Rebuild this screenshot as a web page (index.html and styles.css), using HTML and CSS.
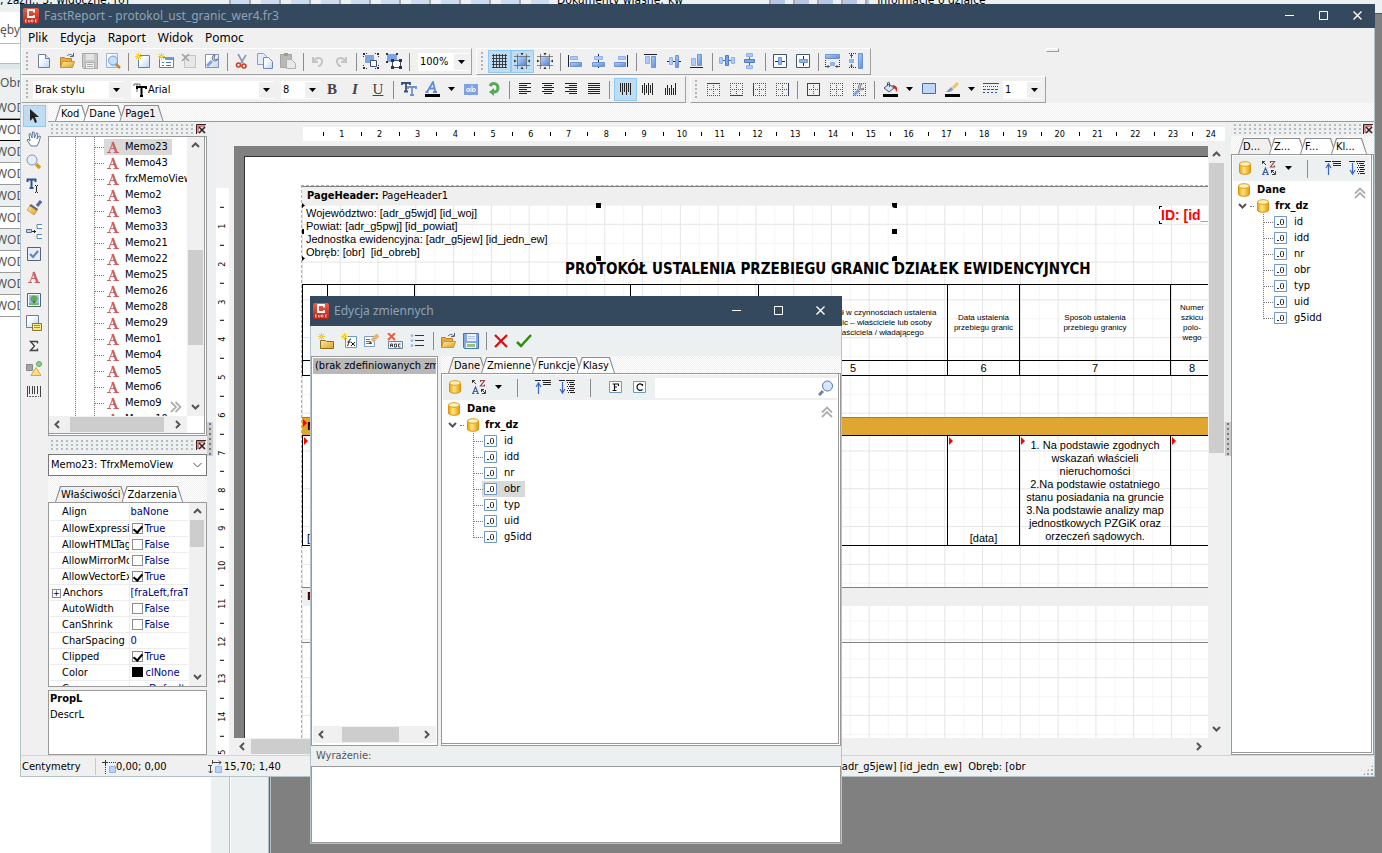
FILE: index.html
```html
<!DOCTYPE html>
<html lang="pl">
<head>
<meta charset="utf-8">
<title>FastReport - protokol_ust_granic_wer4.fr3</title>
<link rel="stylesheet" href="styles.css">
</head>
<body>
<svg class="sprite" aria-hidden="true">
  <defs>
    <linearGradient id="gBlue" x1="0" y1="0" x2="1" y2="1"><stop offset="0" stop-color="#b4d2ff"/><stop offset="1" stop-color="#5b86d0"/></linearGradient>
    <linearGradient id="gPaper" x1="0" y1="0" x2="1" y2="1"><stop offset="0.3" stop-color="#fff"/><stop offset="1" stop-color="#bcd0ee"/></linearGradient>
    <linearGradient id="gGold" x1="0" y1="0" x2="1" y2="1"><stop offset="0" stop-color="#ffe9a8"/><stop offset="1" stop-color="#e0a020"/></linearGradient>
    <linearGradient id="gDrum" x1="0" y1="0" x2="1" y2="0"><stop offset="0" stop-color="#e8a010"/><stop offset="0.4" stop-color="#ffe680"/><stop offset="1" stop-color="#e59a0c"/></linearGradient>
    <linearGradient id="gRed" x1="0" y1="0" x2="0" y2="1"><stop offset="0" stop-color="#e8604c"/><stop offset="1" stop-color="#b82418"/></linearGradient>
  </defs>
  <symbol id="logo" viewBox="0 0 16 16"><rect width="16" height="16" rx="2" fill="url(#gRed)"/><path d="M11 4.500V2H5v7h6V7" fill="none" stroke="#fff" stroke-width="1.800"/><path d="M2 12h2M2 14h2M2.500 12v2M5.500 12v2h1.500v-2M8.500 12v2h1.500v-2zM12 12h2M12 14h2M12.500 12v2" stroke="#f6c0b8" stroke-width=".8" fill="none"/></symbol>
  <symbol id="new" viewBox="0 0 16 16"><path d="M2.500 1.500h7l4 4v9h-11z" fill="url(#gPaper)" stroke="#6b7fa0"/><path d="M9.500 1.500v4h4" fill="#dbe6f8" stroke="#6b7fa0"/></symbol>
  <symbol id="open" viewBox="0 0 16 16"><path d="M1.500 14.500v-10h4l1 1h6v3" fill="#e8a83a" stroke="#c08420"/><path d="M1.500 14.500l2-6h12l-2 6z" fill="url(#gGold)" stroke="#d09428"/><path d="M8 3c2-2 4-2 6 0M14.500 0v3.500H11" fill="none" stroke="#4c6288"/></symbol>
  <symbol id="savegray" viewBox="0 0 16 16"><path d="M.5 .5h15v15h-14l-1-1z" fill="#c8c8c8" stroke="#a8a8a8"/><path d="M4 1h8v6H4z" fill="#e4e4e4"/><path d="M3.500 9.500h9v6h-9z" fill="#efefef" stroke="#b0b0b0"/><path d="M5 11.500h6M5 13.500h6" stroke="#b0b0b0"/></symbol>
  <symbol id="save" viewBox="0 0 16 16"><path d="M.5 .5h15v15h-14l-1-1z" fill="#86a8e6" stroke="#4a72b8"/><path d="M4 1h9v7H4z" fill="#eef4ff"/><path d="M5 3.500h7M5 5.500h7" stroke="#b4c6e6"/><path d="M3 10h10v5H3z" fill="#f4f8ff"/><path d="M4 11h8v3H4z" fill="#90c878"/></symbol>
  <symbol id="preview" viewBox="0 0 16 16"><path d="M1.500 .5h11v14h-11z" fill="url(#gPaper)" stroke="#9fb2d0"/><path d="M11 11l4 4" stroke="#b98b36" stroke-width="2.500"/><circle cx="8" cy="7.500" r="4.500" fill="#c4e2ff" stroke="#6f9bd2"/></symbol>
  <symbol id="star" viewBox="0 0 16 16"><path d="M3.500 0v7M0 3.500h7M1 1l5 5M6 1L1 6" stroke="#f0c828"/><path d="M3 3h1v1H3z" fill="#fff6a0"/></symbol>
  <symbol id="newpage" viewBox="0 0 16 16"><path d="M3.500 2.500h11v12h-11z" fill="url(#gPaper)" stroke="#6b7f9e"/><use href="#star" width="16" height="16"/></symbol>
  <symbol id="newform" viewBox="0 0 16 16"><path d="M1.500 4.500h14v10h-14z" fill="#fff" stroke="#5f7fb6"/><path d="M7 4h8v3H7z" fill="#6f98de"/><path d="M4 9.500h2M8 9.500h5M4 12.500h2M8 12.500h5" stroke="#4f75ba"/><use href="#star" width="16" height="16"/></symbol>
  <symbol id="delpage" viewBox="0 0 16 16"><path d="M3.500 2.500h11v12h-11z" fill="#e8e8e8" stroke="#c4c4c4"/><path d="M1 1l7 7M8 1L1 8" stroke="#a0a0a0" stroke-width="1.500"/></symbol>
  <symbol id="wrench" viewBox="0 0 16 16"><path d="M1.500 1.500h13v13h-13z" fill="url(#gPaper)" stroke="#8094b4"/><path d="M3 13l5-5" stroke="#7ea2e4" stroke-width="3"/><path d="M11 2a3 3 0 1 0 3 4l-3 1-1-2z" fill="#d5dbe8" stroke="#6a7894"/></symbol>
  <symbol id="cut" viewBox="0 0 16 16"><path d="M4 1l5 9M12 2l-5 8" stroke="#8798b4" stroke-width="1.600"/><circle cx="4.500" cy="12" r="2" fill="none" stroke="#d23a28" stroke-width="1.600"/><circle cx="10" cy="13" r="2" fill="none" stroke="#d23a28" stroke-width="1.600"/></symbol>
  <symbol id="copy" viewBox="0 0 16 16"><path d="M.5 .5h6l3 3v8h-9z" fill="#e4ecfb" stroke="#8ba0c4"/><path d="M6.500 4.500h5l4 4v7h-9z" fill="url(#gPaper)" stroke="#6f88b2"/></symbol>
  <symbol id="paste" viewBox="0 0 16 16"><path d="M.5 1.500h11v13H.5z" fill="#b8b8b8" stroke="#a4a4a4"/><path d="M4 0h4v3H4z" fill="#9c9c9c"/><path d="M6.500 6.500h5l4 4v5h-9z" fill="#e8e8e8" stroke="#b0b0b0"/></symbol>
  <symbol id="undo" viewBox="0 0 16 16"><path d="M3 4v5h5M4 8c3-5 9-3 8 1-.4 2-2 4-4 4" fill="none" stroke="#c4c4c4" stroke-width="2"/></symbol>
  <symbol id="redo" viewBox="0 0 16 16"><path d="M13 4v5H8M12 8C9 3 3 5 4 9c.4 2 2 4 4 4" fill="none" stroke="#c4c4c4" stroke-width="2"/></symbol>
  <symbol id="group" viewBox="0 0 16 16"><path d="M2 2h9v8H2z" fill="#7fa4e2"/><path d="M7.500 7.500h6v6h-6z" fill="#fff" stroke="#3a5078"/><path d="M0 0h2v2H0zM14 0h2v2h-2zM0 14h2v2H0zM14 14h2v2h-2z" fill="#333"/><path d="M3 .5h1M.5 3v1M13 .5h-1M15.500 3v1M.5 13v-1M3 15.500h1M15.500 13v-1M13 15.500h-1" stroke="#333"/></symbol>
  <symbol id="ungroup" viewBox="0 0 16 16"><path d="M1 1h10v8H1z" fill="#7fa4e2"/><path d="M6.500 7.500h8v7h-8z" fill="#fff" stroke="#3a5078"/><path d="M0 0h2v2H0zM10 0h2v2h-2zM0 8h2v2H0zM5 6h3v3H5zM13 6h3v3h-3zM5 13h3v3H5zM13 13h3v3h-3z" fill="#333"/></symbol>
  <symbol id="grid" viewBox="0 0 16 16"><path d="M2.500 1v14M5.500 1v14M8.500 1v14M11.500 1v14M14.500 1v14M1 2.500h15M1 5.500h15M1 8.500h15M1 11.500h15M1 14.500h15" stroke="#222" stroke-width=".8"/></symbol>
  <symbol id="snap" viewBox="0 0 16 16"><path d="M4 4h8v8H4z" fill="url(#gBlue)"/><path d="M3.500 1v15M12.500 1v15M0 3.500h16M0 12.500h16" stroke="#555" stroke-width=".7"/><path d="M8 2.500L6.500 0h3zM8 13.500L6.500 16h3zM2.500 8L0 6.500v3zM13.500 8L16 6.500v3z" fill="#333"/></symbol>
  <symbol id="al" viewBox="0 0 16 16"><path d="M1.500 2v12" stroke="#222"/><path d="M3.500 3.500h7v3h-7z" fill="#aecbfb" stroke="#8fb2ee"/><path d="M3.500 9.500h11v4h-11z" fill="url(#gBlue)" stroke="#6e94d4"/></symbol>
  <symbol id="ac" viewBox="0 0 16 16"><path d="M8.500 1v14" stroke="#222"/><path d="M4.500 3.500h8v3h-8z" fill="#aecbfb" stroke="#8fb2ee"/><path d="M2.500 9.500h12v4h-12z" fill="url(#gBlue)" stroke="#6e94d4"/></symbol>
  <symbol id="ar" viewBox="0 0 16 16"><path d="M14.500 2v12" stroke="#222"/><path d="M5.500 3.500h7v3h-7z" fill="#aecbfb" stroke="#8fb2ee"/><path d="M1.500 9.500h11v4h-11z" fill="url(#gBlue)" stroke="#6e94d4"/></symbol>
  <symbol id="at" viewBox="0 0 16 16"><path d="M1 1.500h13" stroke="#222"/><path d="M2.500 3.500h4v7h-4z" fill="#aecbfb" stroke="#8fb2ee"/><path d="M8.500 3.500h4v11h-4z" fill="url(#gBlue)" stroke="#6e94d4"/></symbol>
  <symbol id="am" viewBox="0 0 16 16"><path d="M1 8.500h14" stroke="#222"/><path d="M3.500 4.500h3v7h-3z" fill="#aecbfb" stroke="#8fb2ee"/><path d="M9.500 2.500h3v12h-3z" fill="url(#gBlue)" stroke="#6e94d4"/></symbol>
  <symbol id="ab" viewBox="0 0 16 16"><path d="M1 14.500h13" stroke="#222"/><path d="M2.500 5.500h4v7h-4z" fill="#aecbfb" stroke="#8fb2ee"/><path d="M8.500 1.500h4v11h-4z" fill="url(#gBlue)" stroke="#6e94d4"/></symbol>
  <symbol id="dh" viewBox="0 0 16 16"><path d="M0 7.500h16" stroke="#4668a0"/><path d="M.5 4.500h3v6h-3zM12.500 4.500h3v6h-3z" fill="#aecbfb" stroke="#8fb2ee"/><path d="M6.500 2.500h3v10h-3z" fill="#7ba2e4" stroke="#4f7ac4"/></symbol>
  <symbol id="dv" viewBox="0 0 16 16"><path d="M7.500 0v16" stroke="#4668a0"/><path d="M4.500 .5h6v3h-6zM4.500 12.500h6v3h-6z" fill="#aecbfb" stroke="#8fb2ee"/><path d="M2.500 6.500h10v3h-10z" fill="#7ba2e4" stroke="#4f7ac4"/></symbol>
  <symbol id="ch" viewBox="0 0 16 16"><path d="M1.500 1.500h13v13h-13z" fill="#fff" stroke="#44546c"/><path d="M3 8.500h10" stroke="#222"/><path d="M6.500 4.500h3v7h-3z" fill="#8fb4f4" stroke="#6e94d4"/></symbol>
  <symbol id="cv" viewBox="0 0 16 16"><path d="M1.500 1.500h13v13h-13z" fill="#fff" stroke="#44546c"/><path d="M8.500 3v10" stroke="#222"/><path d="M4.500 6.500h8v3h-8z" fill="#8fb4f4" stroke="#6e94d4"/></symbol>
  <symbol id="sw" viewBox="0 0 16 16"><path d="M.5 1.500h14v4H.5z" fill="url(#gBlue)" stroke="#6e94d4"/><path d="M5 9h5v4H5z" fill="#8fb4f4"/><path d="M.5 7v8M14.500 7v8" stroke="#333" stroke-dasharray="1 1"/><path d="M1 13.500h4M10 13.500h4M3.500 12L2 13.500 3.500 15M11.500 12l1.500 1.500-1.500 1.500" fill="none" stroke="#333" stroke-width=".8"/></symbol>
  <symbol id="sh" viewBox="0 0 16 16"><path d="M10.500 .5h4v15h-4z" fill="url(#gBlue)" stroke="#6e94d4"/><path d="M1 6h5v4H1z" fill="#8fb4f4"/><path d="M1 .5h8M1 14.500h8" stroke="#333" stroke-dasharray="1 1"/><path d="M3.500 1v4M3.500 11v4M2 3l1.500-1.500L5 3M2 12.500L3.500 14 5 12.500" fill="none" stroke="#333" stroke-width=".8"/></symbol>
  <symbol id="tt" viewBox="0 0 16 16"><path d="M1 4V2h8v2M5 2v9M3 10.500h4" fill="none" stroke="#3b4f78" stroke-width="1.800"/><path d="M7 8V6h8v2M11 6v8M9 14h4" fill="none" stroke="#6f92cf" stroke-width="1.800"/></symbol>
  <symbol id="ttb" viewBox="0 0 14 14"><path d="M1 3V1h6v2M4 1v8" fill="none" stroke="#666"/><path d="M4 6V4h9v2M8.500 4v9M7 13h3" fill="none" stroke="#000" stroke-width="2"/></symbol>
  <symbol id="acol" viewBox="0 0 16 16"><path d="M3 11L9 1l2.500 10M5.500 7.500h5M1.500 11h3M9 11h4" fill="none" stroke="#5e8ed6" stroke-width="1.800"/><path d="M1 13h15v3H1z"/></symbol>
  <symbol id="abh" viewBox="0 0 16 16"><path d="M1 3h14v11H1z" fill="#7ea2e4"/><circle cx="5" cy="9" r="1.500" fill="none" stroke="#fff"/><path d="M7 7v4M9 4.500V11" stroke="#fff"/><circle cx="11" cy="9" r="1.500" fill="none" stroke="#fff"/></symbol>
  <symbol id="rot" viewBox="0 0 16 16"><path d="M4 5c2-4 8-3 8 2 0 3-2 4-5 4" fill="none" stroke="#5aa85a" stroke-width="3"/><path d="M8 7v8l-5-4z" fill="#5aa85a"/></symbol>
  <symbol id="tl" viewBox="0 0 16 16"><path d="M2 2.500h12M2 4.500h8M2 6.500h12M2 8.500h8M2 10.500h12M2 12.500h8" stroke="#222"/></symbol>
  <symbol id="tc" viewBox="0 0 16 16"><path d="M2 2.500h12M4 4.500h8M2 6.500h12M4 8.500h8M2 10.500h12M4 12.500h8" stroke="#222"/></symbol>
  <symbol id="tr" viewBox="0 0 16 16"><path d="M2 2.500h12M6 4.500h8M2 6.500h12M6 8.500h8M2 10.500h12M6 12.500h8" stroke="#222"/></symbol>
  <symbol id="tj" viewBox="0 0 16 16"><path d="M2 2.500h12M2 4.500h12M2 6.500h12M2 8.500h12M2 10.500h12M2 12.500h12" stroke="#222"/></symbol>
  <symbol id="vt" viewBox="0 0 16 16"><path d="M3.500 2v9M5.500 2v12M7.500 2v9M9.500 2v12M11.500 2v9M13.500 2v12" stroke="#222"/></symbol>
  <symbol id="vm" viewBox="0 0 16 16"><path d="M2.500 4v8M4.500 2v12M6.500 4v8M8.500 2v12M10.500 4v8M12.500 2v12" stroke="#222"/></symbol>
  <symbol id="vb" viewBox="0 0 16 16"><path d="M2.500 7v7M4.500 4v10M6.500 7v7M8.500 4v10M10.500 7v7M12.500 2v12" stroke="#222"/></symbol>
  <symbol id="dots" viewBox="0 0 16 16"><path d="M2 2.500h13M2 8.500h13M2 14.500h13M2.500 2v13M8.500 2v13M14.500 2v13" fill="none" stroke="#555" stroke-dasharray="1 1"/></symbol>
  <symbol id="bt" viewBox="0 0 16 16"><use href="#dots" width="16" height="16"/><path d="M2 2.500h13" stroke="#33435f"/></symbol>
  <symbol id="bb" viewBox="0 0 16 16"><use href="#dots" width="16" height="16"/><path d="M2 14.500h13" stroke="#33435f"/></symbol>
  <symbol id="bl" viewBox="0 0 16 16"><use href="#dots" width="16" height="16"/><path d="M2.500 2v13" stroke="#33435f"/></symbol>
  <symbol id="br" viewBox="0 0 16 16"><use href="#dots" width="16" height="16"/><path d="M14.500 2v13" stroke="#33435f"/></symbol>
  <symbol id="ba" viewBox="0 0 16 16"><use href="#dots" width="16" height="16"/><path d="M2.500 2.500h12v12h-12z" fill="none" stroke="#33435f"/></symbol>
  <symbol id="bw" viewBox="0 0 16 16"><use href="#dots" width="16" height="16"/><path d="M3 14l5-5" stroke="#7ea2e4" stroke-width="3"/><path d="M11 3a3 3 0 1 0 2 4l-3 1-1-2z" fill="#ccd" stroke="#888"/></symbol>
  <symbol id="bucket" viewBox="0 0 16 16"><path d="M2 7l5-4 5 4-5 4z" fill="#d9e6f8" stroke="#44546c"/><path d="M5.500 5V2c0-1 2-1 2 0v4" fill="none" stroke="#44546c"/><path d="M10 4c4 0 6 2 5 7-1-2-2-3-3-4z" fill="#d62a1a"/><path d="M1 13h15v3H1z"/></symbol>
  <symbol id="rectf" viewBox="0 0 16 16"><path d="M1.500 2.500h13v10h-13z" fill="#c2d6fb" stroke="#4a6aa4"/></symbol>
  <symbol id="brush" viewBox="0 0 16 16"><path d="M14 2L9 7" stroke="#ecc468" stroke-width="3"/><path d="M7 6l2.500 2.500L6 11H2z" fill="#8b9ab4"/><path d="M1 13h15v3H1z"/></symbol>
  <symbol id="lines" viewBox="0 0 16 16"><path d="M0 2.500h16" stroke="#2f5296"/><path d="M0 5.500h16" stroke="#2f5296" stroke-dasharray="1 1"/><path d="M0 8.500h16" stroke="#2f5296" stroke-dasharray="3 1"/><path d="M0 11.500h16" stroke="#2f5296" stroke-dasharray="2 2"/></symbol>
  <symbol id="dd" viewBox="0 0 7 4"><path d="M0 0h7L3.500 4z"/></symbol>
  <symbol id="arrow" viewBox="0 0 16 16"><path d="M4 1v12l3-3 2 5 2-1-2-5h4z" fill="#222"/></symbol>
  <symbol id="hand" viewBox="0 0 16 16"><path d="M5 15L1 9l1-1 2 2-1-7 1.500-.5L6 7l.5-6H8l.5 6 2-5 1.500.5L11 8l2-3 1.500.5L13 11l-2 4z" fill="#fff" stroke="#5d79a8"/></symbol>
  <symbol id="zoomt" viewBox="0 0 16 16"><path d="M10 10l4 4" stroke="#c9a028" stroke-width="3.500"/><circle cx="6" cy="6" r="5" fill="#e6f0fc" stroke="#8194b0"/></symbol>
  <symbol id="textt" viewBox="0 0 16 16"><path d="M1.500 5V2.500h8V5M5.500 2v9M3.500 11h4" fill="none" stroke="#2c5596" stroke-width="2"/><path d="M9 8.500h1M11 8.500h1M9 15.500h1M11 15.500h1M10.500 9v6" stroke="#222"/></symbol>
  <symbol id="fmt" viewBox="0 0 16 16"><path d="M15 1l-4 5" stroke="#5566a8" stroke-width="3"/><path d="M5 4l7 5-1 2-8-5z" fill="#667"/><path d="M4 6l7 5-3 4-7-5z" fill="url(#gGold)" stroke="#b98c20" stroke-width=".6"/></symbol>
  <symbol id="bands" viewBox="0 0 16 16"><path d="M.5 6.500h5v3h-5z" fill="#c0d2ee" stroke="#5b7092"/><path d="M6 8.500h4M8.500 7v3" stroke="#222"/><path d="M16 1.500h-5v4h5M16 11.500h-5v4h5" fill="#fff" stroke="#5b88c0"/></symbol>
  <symbol id="chk" viewBox="0 0 16 16"><path d="M1.500 1.500h13v13h-13z" fill="#e8ecf4" stroke="#56627a"/><path d="M4 8l3 3 5-6" fill="none" stroke="#5f7ec4" stroke-width="2"/></symbol>
  <symbol id="aicon" viewBox="0 0 12 12"><path d="M2 11L6 1M3.500 7.500h4M0 11.500h4M6.500 11.500H12" fill="none" stroke="#c86464"/><path d="M5.500 1l4 10.500" stroke="#c86464" stroke-width="2.400"/></symbol>
  <symbol id="pic" viewBox="0 0 16 16"><path d="M1.500 1.500h13v13h-13z" fill="#fff" stroke="#56627a"/><path d="M3 3h10v10H3z" fill="#9cc4f4"/><circle cx="8" cy="7" r="3.500" fill="#58ac54"/><path d="M7 9h2v3H7z" fill="#8a5a20"/><path d="M3 11h10v2H3z" fill="#6cbc64"/></symbol>
  <symbol id="sub" viewBox="0 0 16 16"><path d="M.5 .5h12v12H.5z" fill="url(#gPaper)" stroke="#6b7fa0"/><path d="M6.500 8.500h9v7h-9z" fill="#fbe684" stroke="#8a7a30"/><path d="M8 10.500h6M8 12.500h6" stroke="#a89440"/></symbol>
  <symbol id="sigma" viewBox="0 0 16 16"><path d="M11.500 5.500v-2h-7l4 4.500-4 4.500h7v-2" fill="none" stroke="#444" stroke-width="1.400"/></symbol>
  <symbol id="shapes" viewBox="0 0 16 16"><path d="M.5 3.500h6v6h-6z" fill="#a4a4a4" stroke="#888"/><circle cx="13" cy="3" r="2.500" fill="#8ed08e" stroke="#5aa85a"/><path d="M10 6.500l5 8H5z" fill="#ffdf80" stroke="#d4a840"/></symbol>
  <symbol id="bar" viewBox="0 0 16 16"><path d="M1.500 2v11M3.500 2v8M6.500 2v8M8.500 2v8M11.500 2v8M14.500 2v11" stroke="#444"/><path d="M3 12.500h10" stroke="#666" stroke-dasharray="2 1"/></symbol>
  <symbol id="drum" viewBox="0 0 12 14"><path d="M.5 3v8c0 3 11 3 11 0V3z" fill="url(#gDrum)" stroke="#d8930c"/><ellipse cx="6" cy="3" rx="5.500" ry="2.300" fill="#fff1b8" stroke="#dca020"/></symbol>
  <symbol id="az" viewBox="0 0 16 16"><path d="M9.500 3V1.500h4L9.500 7h4V5.500" fill="none" stroke="#9c4450" stroke-width="1.200"/><path d="M2 14l2.500-6L7 14M3 12.500h3M1 14.500h2.500M5.500 14.500H8" fill="none" stroke="#3f5fa4" stroke-width="1.200"/><path d="M1 1l4 4M1.500 4V1.500H4M10 10l4 4M10.500 13v-2.500H13M14.500 11v3.500H11" fill="none" stroke="#111" stroke-width=".8"/></symbol>
  <symbol id="colup" viewBox="0 0 16 16"><path d="M3.500 15V5M1 8l2.500-4L6 8" fill="none" stroke="#3a66c8" stroke-width="1.200"/><path d="M0 1.500h6M7 1.500h9M8 3.500h8M8 5.500h8" stroke="#222"/></symbol>
  <symbol id="coldn" viewBox="0 0 16 16"><path d="M3.500 3v10M1 10l2.500 4L6 10" fill="none" stroke="#3a66c8" stroke-width="1.200"/><path d="M0 1.500h6M7 1.500h9M8 3.500h1M10 3.500h5M9 5.500h1M11 5.500h5M8 7.500h1M10 7.500h5M9 9.500h1M11 9.500h5M8 11.500h1M10 11.500h5M9 13.500h1M11 13.500h5" stroke="#222"/></symbol>
  <symbol id="fbox" viewBox="0 0 14 14"><path d="M.5 1.500h12v11H.5z" fill="#fff" stroke="#6f98c4"/><path d="M5.500 10.500V4M3.500 4h6v2M5 7h3M3.500 10.500h4" fill="none" stroke="#111" stroke-width="1.200"/></symbol>
  <symbol id="cbox" viewBox="0 0 14 14"><path d="M.5 1.500h12v11H.5z" fill="#fff" stroke="#6f98c4"/><path d="M9.500 4v2M9 5C7.500 3 4 4 4 7s3.500 4.500 5.500 2.500" fill="none" stroke="#111" stroke-width="1.200"/></symbol>
  <symbol id="mag" viewBox="0 0 16 16"><path d="M5 11l-4 4" stroke="#6a82ac" stroke-width="3"/><circle cx="9.500" cy="6" r="5" fill="#d6e8ff" stroke="#5874a4"/></symbol>
  <symbol id="field" viewBox="0 0 13 12"><path d="M.5 .5h12v11H.5z" fill="#fff" stroke="#6f98c4"/><path d="M3 8h2v1H3z" fill="#222"/><rect x="6.500" y="3.500" width="3" height="5" rx="1" fill="none" stroke="#222"/></symbol>
  <symbol id="newcat" viewBox="0 0 16 16"><path d="M2.500 15.500v-8h5l1 1h7v7z" fill="url(#gGold)" stroke="#8f6c18"/><use href="#star" width="16" height="16"/></symbol>
  <symbol id="newvar" viewBox="0 0 16 16"><path d="M4.500 3.500h11v11h-11z" fill="#fff" stroke="#6f98c4"/><path d="M6 13c2 0 1-7 4-7M6.500 9h3M10 9l4 4M14 9l-4 4" fill="none" stroke="#111"/><use href="#star" width="16" height="16"/></symbol>
  <symbol id="edit" viewBox="0 0 16 16"><path d="M.5 3.500h10v10h-10z" fill="#fff" stroke="#7f9ccc"/><path d="M2 6.500h4M2 8.500h4M2 10.500h6" stroke="#5078c0"/><path d="M14 2L8 8" stroke="#e4b478" stroke-width="4"/><path d="M6 8l2 2-3 1z" fill="#333"/></symbol>
  <symbol id="delvar" viewBox="0 0 16 16"><path d="M1.500 8.500h14v7h-14z" fill="#eef4ff" stroke="#6c8098"/><path d="M3.500 14v-3h2v3M3.500 12.500h2M7.500 11v3h2v-3zM13.500 11h-2v3h2" fill="none" stroke="#222" stroke-width=".8"/><path d="M1 0l7 7M8 0L1 7" stroke="#e85c40" stroke-width="2"/></symbol>
  <symbol id="list" viewBox="0 0 16 16"><circle cx="2" cy="2.500" r="1.500" fill="#9cbcf0"/><circle cx="2" cy="7.500" r="1.500" fill="#9cbcf0"/><circle cx="2" cy="12.500" r="1.500" fill="#9cbcf0"/><path d="M5 2.500h9M5 7.500h9M5 12.500h9" stroke="#333"/></symbol>
  <symbol id="cross" viewBox="0 0 16 16"><path d="M2 2l12 12M14 2L2 14" stroke="#e00808" stroke-width="2.200"/></symbol>
  <symbol id="ok" viewBox="0 0 16 16"><path d="M1 9l4 4L15 2" fill="none" stroke="#2e8c10" stroke-width="2.500"/></symbol>
  <symbol id="cu" viewBox="0 0 9 6"><path d="M1 5l3.500-3.500L8 5" fill="none" stroke="#555" stroke-width="2"/></symbol>
  <symbol id="cd" viewBox="0 0 9 6"><path d="M1 1l3.500 3.500L8 1" fill="none" stroke="#555" stroke-width="2"/></symbol>
  <symbol id="cdt" viewBox="0 0 9 6"><path d="M.5 1l4 4 4-4" fill="none" stroke="#555"/></symbol>
  <symbol id="cl" viewBox="0 0 6 9"><path d="M5 1L1.500 4.500 5 8" fill="none" stroke="#555" stroke-width="2"/></symbol>
  <symbol id="cr" viewBox="0 0 6 9"><path d="M1 1l3.500 3.500L1 8" fill="none" stroke="#555" stroke-width="2"/></symbol>
  <symbol id="dbl" viewBox="0 0 12 12"><path d="M1 6.500L6 1.500l5 5M1 11l5-5 5 5" fill="none" stroke="#b0b0b0" stroke-width="1.800"/></symbol>
  <symbol id="min" viewBox="0 0 9 9"><path d="M0 4.500h9" stroke="#fff"/></symbol>
  <symbol id="max" viewBox="0 0 9 9"><path d="M.5 .5h8v8h-8z" fill="none" stroke="#fff"/></symbol>
  <symbol id="x" viewBox="0 0 9 9"><path d="M.5 .5l8 8M8.500 .5l-8 8" stroke="#fff" stroke-width="1.400"/></symbol>
  <symbol id="pin" viewBox="0 0 10 10"><path d="M0 0h10v10H0z" fill="#f4e4e2"/><path d="M10 .5H.5V10" fill="none" stroke="#402020"/><path d="M1 1h8v2H1zM1 1h2v8H1z" fill="#d08884"/><path d="M3 3l6 6M9 3L3 9" stroke="#222" stroke-width="1.500"/></symbol>
  <symbol id="pos" viewBox="0 0 14 14"><path d="M0 2.500h6M3.500 0v6" stroke="#333"/><path d="M7 2.500h7M3.500 7v7" stroke="#333" stroke-dasharray="1 1"/><path d="M7.500 6.500h6v6h-6z" fill="#b8d2fc" stroke="#8fb4f4"/></symbol>
  <symbol id="size" viewBox="0 0 14 14"><path d="M5 2.500h8M11 .5l2 2-2 2M4.500 0v4M2.500 6v7M.5 11l2 2 2-2M0 5.500h4" fill="none" stroke="#333" stroke-width=".9"/><path d="M7.500 6.500h6v6h-6z" fill="#b8d2fc" stroke="#8fb4f4"/></symbol>
</svg>

<div class="desktop">
  <div class="app-top"><span>; zazn.: 3; widoczne: [0]</span><i class="bar-a"></i><span class="own">Dokumenty własne:</span><span>kw</span><i class="bar-b"></i><span class="info">Informacje o działce</span></div>
  <div class="app-left">
    <div class="al-label">ęby</div><div class="al-input"></div><div class="al-head">Obr</div>
    <ul><li>WOD</li><li class="cur">WOD</li><li>WOD</li><li>WOD</li><li>WOD</li><li>WOD</li><li>WOD</li><li>WOD</li><li>WOD</li><li>WOD</li></ul>
  </div>
  <div class="app-bottom"><i></i><i></i><i></i></div>

  <main class="window main">
    <header class="title"><svg class="i16"><use href="#logo"/></svg><h1>FastReport - protokol_ust_granic_wer4.fr3</h1>
      <button aria-label="Minimalizuj"><svg><use href="#min"/></svg></button><button aria-label="Maksymalizuj"><svg><use href="#max"/></svg></button><button aria-label="Zamknij"><svg><use href="#x"/></svg></button></header>
    <nav class="menu"><button>Plik</button><button>Edycja</button><button>Raport</button><button>Widok</button><button>Pomoc</button><i class="stub"></i></nav>

    <div class="bars">
      <div class="toolbar"><i class="grip"></i>
        <button aria-label="Nowy"><svg><use href="#new"/></svg></button><button aria-label="Otwórz"><svg><use href="#open"/></svg></button><button aria-label="Zapisz"><svg><use href="#savegray"/></svg></button><button aria-label="Podgląd"><svg><use href="#preview"/></svg></button><hr>
        <button aria-label="Nowa strona"><svg><use href="#newpage"/></svg></button><button aria-label="Nowy formularz"><svg><use href="#newform"/></svg></button><button aria-label="Usuń stronę"><svg><use href="#delpage"/></svg></button><button aria-label="Ustawienia"><svg><use href="#wrench"/></svg></button><hr>
        <button aria-label="Wytnij"><svg><use href="#cut"/></svg></button><button aria-label="Kopiuj"><svg><use href="#copy"/></svg></button><button aria-label="Wklej"><svg><use href="#paste"/></svg></button><hr>
        <button aria-label="Cofnij"><svg><use href="#undo"/></svg></button><button aria-label="Ponów"><svg><use href="#redo"/></svg></button><hr>
        <button aria-label="Grupuj"><svg><use href="#group"/></svg></button><button aria-label="Rozgrupuj"><svg><use href="#ungroup"/></svg></button><hr>
        <span class="combo w-zoom"><select aria-label="Powiększenie"><option>100%</option></select><svg><use href="#dd"/></svg></span>
      </div>
      <div class="toolbar"><i class="grip"></i>
        <button class="on" aria-label="Siatka"><svg><use href="#grid"/></svg></button><button class="on" aria-label="Przyciągaj"><svg><use href="#snap"/></svg></button><button aria-label="Dopasuj"><svg><use href="#snap"/></svg></button><hr>
        <button aria-label="Do lewej"><svg><use href="#al"/></svg></button><button aria-label="Do środka"><svg><use href="#ac"/></svg></button><button aria-label="Do prawej"><svg><use href="#ar"/></svg></button><hr>
        <button aria-label="Do góry"><svg><use href="#at"/></svg></button><button aria-label="Środek pionowo"><svg><use href="#am"/></svg></button><button aria-label="Do dołu"><svg><use href="#ab"/></svg></button><hr>
        <button aria-label="Odstęp poziomy"><svg><use href="#dh"/></svg></button><button aria-label="Odstęp pionowy"><svg><use href="#dv"/></svg></button><hr>
        <button aria-label="Centruj poziomo"><svg><use href="#ch"/></svg></button><button aria-label="Centruj pionowo"><svg><use href="#cv"/></svg></button><hr>
        <button aria-label="Ta sama szerokość"><svg><use href="#sw"/></svg></button><button aria-label="Ta sama wysokość"><svg><use href="#sh"/></svg></button>
      </div>
    </div>
    <div class="bars">
      <div class="toolbar"><i class="grip"></i>
        <span class="combo w-style"><select aria-label="Styl"><option>Brak stylu</option></select><svg><use href="#dd"/></svg></span>
        <span class="combo w-font"><svg class="tticon"><use href="#ttb"/></svg><select aria-label="Czcionka"><option>Arial</option></select><svg><use href="#dd"/></svg></span>
        <span class="combo w-size"><select aria-label="Rozmiar"><option>8</option></select><svg><use href="#dd"/></svg></span>
        <button class="ch b">B</button><button class="ch i">I</button><button class="ch u">U</button><hr>
        <button aria-label="Czcionka"><svg><use href="#tt"/></svg></button><button aria-label="Kolor tekstu"><svg><use href="#acol"/></svg></button><button class="drop" aria-label="Kolory tekstu"><svg><use href="#dd"/></svg></button><button aria-label="Wyróżnienie"><svg><use href="#abh"/></svg></button><button aria-label="Obrót"><svg><use href="#rot"/></svg></button><hr>
        <button aria-label="Lewo"><svg><use href="#tl"/></svg></button><button aria-label="Środek"><svg><use href="#tc"/></svg></button><button aria-label="Prawo"><svg><use href="#tr"/></svg></button><button aria-label="Wyjustuj"><svg><use href="#tj"/></svg></button><hr>
        <button class="on" aria-label="Góra"><svg><use href="#vt"/></svg></button><button aria-label="Środek w pionie"><svg><use href="#vm"/></svg></button><button aria-label="Dół"><svg><use href="#vb"/></svg></button>
      </div>
      <div class="toolbar"><i class="grip"></i>
        <button aria-label="Ramka górna"><svg><use href="#bt"/></svg></button><button aria-label="Ramka dolna"><svg><use href="#bb"/></svg></button><button aria-label="Ramka lewa"><svg><use href="#bl"/></svg></button><button aria-label="Ramka prawa"><svg><use href="#br"/></svg></button><hr>
        <button aria-label="Wszystkie ramki"><svg><use href="#ba"/></svg></button><button aria-label="Bez ramek"><svg><use href="#dots"/></svg></button><button aria-label="Edycja ramki"><svg><use href="#bw"/></svg></button><hr>
        <button aria-label="Wypełnienie"><svg><use href="#bucket"/></svg></button><button class="drop" aria-label="Kolory wypełnienia"><svg><use href="#dd"/></svg></button><button aria-label="Tło"><svg><use href="#rectf"/></svg></button><button aria-label="Kolor linii"><svg><use href="#brush"/></svg></button><button class="drop" aria-label="Kolory linii"><svg><use href="#dd"/></svg></button><button aria-label="Styl linii"><svg><use href="#lines"/></svg></button>
        <span class="combo w-size"><select aria-label="Grubość"><option>1</option></select><svg><use href="#dd"/></svg></span>
      </div>
    </div>

    <div class="workspace">
      <div class="tools">
        <button class="on" aria-label="Wybór"><svg><use href="#arrow"/></svg></button><button aria-label="Ręka"><svg><use href="#hand"/></svg></button><button aria-label="Lupa"><svg><use href="#zoomt"/></svg></button><button aria-label="Tekst"><svg><use href="#textt"/></svg></button><button aria-label="Malarz"><svg><use href="#fmt"/></svg></button><button aria-label="Wstęga"><svg><use href="#bands"/></svg></button><button aria-label="Pole wyboru"><svg><use href="#chk"/></svg></button><button aria-label="Memo"><svg class="s12"><use href="#aicon"/></svg></button><button aria-label="Obraz"><svg><use href="#pic"/></svg></button><button aria-label="Podraport"><svg><use href="#sub"/></svg></button><button aria-label="Suma"><svg><use href="#sigma"/></svg></button><button aria-label="Kształt"><svg><use href="#shapes"/></svg></button><button aria-label="Kod kreskowy"><svg><use href="#bar"/></svg></button>
      </div>
      <div class="work">
        <div class="tabs pages"><button>Kod</button><button>Dane</button><button class="cur">Page1</button></div>
        <div class="panels">
          <aside class="left">
            <div class="dock"><i></i><svg><use href="#pin"/></svg></div>
            <section class="objtree">
              <ul>
                <li class="sel"><svg><use href="#aicon"/></svg><span>Memo23</span></li><li><svg><use href="#aicon"/></svg><span>Memo43</span></li><li><svg><use href="#aicon"/></svg><span>frxMemoView1</span></li><li><svg><use href="#aicon"/></svg><span>Memo2</span></li><li><svg><use href="#aicon"/></svg><span>Memo3</span></li><li><svg><use href="#aicon"/></svg><span>Memo33</span></li><li><svg><use href="#aicon"/></svg><span>Memo21</span></li><li><svg><use href="#aicon"/></svg><span>Memo22</span></li><li><svg><use href="#aicon"/></svg><span>Memo25</span></li><li><svg><use href="#aicon"/></svg><span>Memo26</span></li><li><svg><use href="#aicon"/></svg><span>Memo28</span></li><li><svg><use href="#aicon"/></svg><span>Memo29</span></li><li><svg><use href="#aicon"/></svg><span>Memo1</span></li><li><svg><use href="#aicon"/></svg><span>Memo4</span></li><li><svg><use href="#aicon"/></svg><span>Memo5</span></li><li><svg><use href="#aicon"/></svg><span>Memo6</span></li><li><svg><use href="#aicon"/></svg><span>Memo9</span></li><li><svg><use href="#aicon"/></svg><span>Memo10</span></li>
              </ul>
              <svg class="more"><use href="#dbl"/></svg>
              <div class="sb v"><button aria-label="W górę"><svg><use href="#cu"/></svg></button><div class="track"><i style="top:39%;height:39%"></i></div><button aria-label="W dół"><svg><use href="#cd"/></svg></button></div>
              <div class="sb h"><button aria-label="W lewo"><svg><use href="#cl"/></svg></button><div class="track"><i style="left:4%;width:90%"></i></div><button aria-label="W prawo"><svg><use href="#cr"/></svg></button></div>
            </section>
            <div class="dock"><i></i><svg><use href="#pin"/></svg></div>
            <span class="combo object"><select aria-label="Obiekt"><option>Memo23: TfrxMemoView</option></select><svg><use href="#cdt"/></svg></span>
            <div class="tabs"><button class="cur">Właściwości</button><button>Zdarzenia</button></div>
            <section class="props">
              <div class="clip"><table>
                <tr><th>Align</th><td>baNone</td></tr>
                <tr><th>AllowExpressions</th><td><label><input type="checkbox" checked>True</label></td></tr>
                <tr><th>AllowHTMLTags</th><td><label><input type="checkbox">False</label></td></tr>
                <tr><th>AllowMirrorMode</th><td><label><input type="checkbox">False</label></td></tr>
                <tr><th>AllowVectorExport</th><td><label><input type="checkbox" checked>True</label></td></tr>
                <tr><th class="exp"><button aria-label="Rozwiń">+</button>Anchors</th><td>[fraLeft,fraTop]</td></tr>
                <tr><th>AutoWidth</th><td><label><input type="checkbox">False</label></td></tr>
                <tr><th>CanShrink</th><td><label><input type="checkbox">False</label></td></tr>
                <tr><th>CharSpacing</th><td>0</td></tr>
                <tr><th>Clipped</th><td><label><input type="checkbox" checked>True</label></td></tr>
                <tr><th>Color</th><td><i class="swatch"></i>clNone</td></tr>
                <tr><th>Cursor</th><td class="ind">crDefault</td></tr>
              </table></div>
              <div class="sb v"><button aria-label="W górę"><svg><use href="#cu"/></svg></button><div class="track"><i style="top:0;height:18%"></i></div><button aria-label="W dół"><svg><use href="#cd"/></svg></button></div>
            </section>
            <section class="descr"><b>PropL</b><p>DescrL</p></section>
          </aside>
          <div class="split"><i></i></div>

          <section class="designer">
            <ol class="ruler-h"><li>1</li><li>2</li><li>3</li><li>4</li><li>5</li><li>6</li><li>7</li><li>8</li><li>9</li><li>10</li><li>11</li><li>12</li><li>13</li><li>14</li><li>15</li><li>16</li><li>17</li><li>18</li><li>19</li><li>20</li><li>21</li><li>22</li><li>23</li><li>24</li></ol>
            <ol class="ruler-v"><li>1</li><li>2</li><li>3</li><li>4</li><li>5</li><li>6</li><li>7</li><li>8</li><li>9</li><li>10</li><li>11</li><li>12</li><li>13</li><li>14</li><li>15</li></ol>
            <div class="canvas"><div class="sheet"><div class="area">
              <section class="band head">
                <h2><b>PageHeader:</b> PageHeader1</h2>
                <p class="memo where">Województwo: [adr_g5wjd] [id_woj]<br>Powiat: [adr_g5pwj] [id_powiat]<br>Jednostka ewidencyjna: [adr_g5jew] [id_jedn_ew]<br>Obręb: [obr]&nbsp; [id_obreb]<i class="n"></i><i class="ne"></i><i class="e"></i><i class="s"></i><i class="se"></i><i class="nw"></i><i class="w"></i><i class="sw"></i></p>
                <p class="memo ident">ID: [id_p</p>
                <p class="memo doc">PROTOKÓŁ USTALENIA PRZEBIEGU GRANIC DZIAŁEK EWIDENCYJNYCH</p>
                <table class="form"><colgroup><col class="c1"><col class="c2"><col class="c3"><col class="c4"><col class="c5"><col class="c6"><col class="c7"><col class="c8"></colgroup>
                  <tr class="names"><td></td><td></td><td></td><td></td><td class="part">Udział w czynnościach ustalenia<br>granic – właściciele lub osoby<br>właściciela / władającego</td><td>Data ustalenia<br>przebiegu granic</td><td>Sposób ustalenia<br>przebiegu granicy</td><td>Numer<br>szkicu<br>polo-<br>wego</td></tr>
                  <tr class="nums"><td></td><td></td><td></td><td></td><td>5</td><td>6</td><td>7</td><td>8</td></tr>
                </table>
              </section>
              <section class="band data">
                <h2 class="flag">M</h2>
                <table class="form"><colgroup><col class="c1"><col class="c2"><col class="c3"><col class="c4"><col class="c5"><col class="c6"><col class="c7"><col class="c8"></colgroup>
                  <tr><td class="flag low first">[</td><td></td><td></td><td></td><td></td><td class="flag low">[data]</td><td class="flag">1. Na podstawie zgodnych<br>wskazań właścieli<br>nieruchomości<br>2.Na podstawie ostatniego<br>stanu posiadania na gruncie<br>3.Na podstawie analizy map<br>jednostkowych PZGiK oraz<br>orzeczeń sądowych.</td><td class="flag"></td></tr>
                </table>
              </section>
              <section class="band foot"><h2><b>P</b></h2></section>
            </div></div></div>
            <div class="sb v"><button aria-label="W górę"><svg><use href="#cu"/></svg></button><div class="track"><i style="top:0;height:52%"></i></div><button aria-label="W dół"><svg><use href="#cd"/></svg></button></div>
            <div class="sb h"><button aria-label="W lewo"><svg><use href="#cl"/></svg></button><div class="track"><i style="left:0;width:55%"></i></div><button aria-label="W prawo"><svg><use href="#cr"/></svg></button></div>
          </section>

          <div class="split narrow"><i></i></div>
          <aside class="right">
            <div class="dock"><i></i><svg><use href="#pin"/></svg></div>
            <div class="tabs"><button class="cur">D...</button><button>Z...</button><button>F...</button><button>Kl...</button></div>
            <section class="datapanel">
              <div class="databar"><button aria-label="Dane"><svg class="dr"><use href="#drum"/></svg></button><button aria-label="Sortuj"><svg><use href="#az"/></svg></button><button class="drop" aria-label="Sortowanie"><svg><use href="#dd"/></svg></button><hr><button aria-label="Zwiń"><svg><use href="#colup"/></svg></button><button aria-label="Rozwiń"><svg><use href="#coldn"/></svg></button></div>
              <svg class="up"><use href="#dbl"/></svg>
              <div class="root"><svg class="dr"><use href="#drum"/></svg>Dane</div>
              <div class="node"><svg class="chev"><use href="#cd"/></svg><i></i><svg class="dr"><use href="#drum"/></svg>frx_dz</div>
              <ul class="fields"><li><svg><use href="#field"/></svg>id</li><li><svg><use href="#field"/></svg>idd</li><li><svg><use href="#field"/></svg>nr</li><li><svg><use href="#field"/></svg>obr</li><li><svg><use href="#field"/></svg>typ</li><li><svg><use href="#field"/></svg>uid</li><li><svg><use href="#field"/></svg>g5idd</li></ul>
            </section>
          </aside>
        </div>
      </div>
    </div>
    <footer class="status"><span class="unit">Centymetry</span><span class="xy"><svg><use href="#pos"/></svg>0,00; 0,00</span><span class="wh"><svg><use href="#size"/></svg>15,70; 1,40</span><span class="expr">[adr_g5jew] [id_jedn_ew]&nbsp; Obręb: [obr</span><i class="sizer"></i></footer>
  </main>

  <section class="window dialog" role="dialog" aria-label="Edycja zmiennych">
    <header class="title"><svg class="i16"><use href="#logo"/></svg><h1>Edycja zmiennych</h1>
      <button aria-label="Minimalizuj"><svg><use href="#min"/></svg></button><button aria-label="Maksymalizuj"><svg><use href="#max"/></svg></button><button aria-label="Zamknij"><svg><use href="#x"/></svg></button></header>
    <div class="dlgbar"><button aria-label="Kategoria"><svg><use href="#newcat"/></svg></button><button aria-label="Zmienna"><svg><use href="#newvar"/></svg></button><button aria-label="Edycja"><svg><use href="#edit"/></svg></button><button aria-label="Usuń"><svg><use href="#delvar"/></svg></button><button aria-label="Lista"><svg><use href="#list"/></svg></button><hr><button aria-label="Wczytaj"><svg><use href="#open"/></svg></button><button aria-label="Zapisz"><svg><use href="#save"/></svg></button><hr><button aria-label="Anuluj"><svg><use href="#cross"/></svg></button><button aria-label="OK"><svg><use href="#ok"/></svg></button></div>
    <div class="dlgbody">
      <div class="vars"><div class="none">(brak zdefiniowanych zmiennych)</div><div class="sb h"><button aria-label="W lewo"><svg><use href="#cl"/></svg></button><div class="track"><i style="left:13%;width:65%"></i></div><button aria-label="W prawo"><svg><use href="#cr"/></svg></button></div></div>
      <div class="pick">
        <div class="tabs"><button class="cur">Dane</button><button>Zmienne</button><button>Funkcje</button><button>Klasy</button></div>
        <section class="datapanel">
          <div class="databar"><button aria-label="Dane"><svg class="dr"><use href="#drum"/></svg></button><button aria-label="Sortuj"><svg><use href="#az"/></svg></button><button class="drop" aria-label="Sortowanie"><svg><use href="#dd"/></svg></button><hr><button aria-label="Zwiń"><svg><use href="#colup"/></svg></button><button aria-label="Rozwiń"><svg><use href="#coldn"/></svg></button><hr><button aria-label="Pola"><svg class="s14"><use href="#fbox"/></svg></button><button aria-label="Wielkość liter"><svg class="s14"><use href="#cbox"/></svg></button><input type="text" aria-label="Szukaj"><button class="find" aria-label="Znajdź"><svg><use href="#mag"/></svg></button></div>
          <svg class="up"><use href="#dbl"/></svg>
          <div class="root"><svg class="dr"><use href="#drum"/></svg>Dane</div>
          <div class="node"><svg class="chev"><use href="#cd"/></svg><i></i><svg class="dr"><use href="#drum"/></svg>frx_dz</div>
          <ul class="fields"><li><svg><use href="#field"/></svg>id</li><li><svg><use href="#field"/></svg>idd</li><li><svg><use href="#field"/></svg>nr</li><li class="sel"><svg><use href="#field"/></svg>obr</li><li><svg><use href="#field"/></svg>typ</li><li><svg><use href="#field"/></svg>uid</li><li><svg><use href="#field"/></svg>g5idd</li></ul>
        </section>
      </div>
    </div>
    <label class="exprlabel" for="expr">Wyrażenie:</label>
    <textarea id="expr"></textarea>
  </section>
</div>
</body>
</html>
```
FILE: styles.css
```css
* { box-sizing: border-box; }
html, body { height: 100%; margin: 0; }
body, button, input, select, textarea { font: 11px/16px "DejaVu Sans Condensed", "Noto Sans", sans-serif; color: #000; }
button { border: 0; padding: 0; background: none; display: flex; align-items: center; justify-content: center; flex: none; }
ul, ol { list-style: none; margin: 0; padding: 0; }
h1, h2, p { margin: 0; font-size: inherit; font-weight: normal; }
hr { border: 0; border-left: 1px solid #8c8c8c; width: 1px; height: 18px; margin: 0 3px; flex: none; }
svg { width: 16px; height: 16px; flex: none; display: block; }
.sprite { position: absolute; width: 0; height: 0; }
select { appearance: none; border: 0; padding: 0; background: transparent; outline: 0; width: 100%; height: 16px; min-width: 0; }

/* Application behind the designer */
.desktop { position: relative; height: 100%; overflow: hidden; background: #808080; }
.app-top { position: absolute; left: 0; right: 0; top: 0; height: 14px; background: #ecf0f1; display: flex; line-height: 6px; border-bottom: 1px solid #555; font-size: 12px; white-space: nowrap; }
.app-top span { height: 6px; margin-top: -3px; }
.bar-a { width: 320px; margin: 0 8px 0 100px; border-left: 2px solid #aaa; background: repeating-linear-gradient(90deg, #cfdcf0 0 18px, #a9a9a9 18px 20px, #ecf0f1 20px 30px); height: 4px; }
.own { width: 111px; }
.bar-b { width: 100px; margin: 0 8px 0 86px; background: repeating-linear-gradient(90deg, #a9a9a9 0 2px, #b8c8e4 2px 16px, #ecf0f1 16px 24px); height: 4px; }
.app-left { position: absolute; left: 0; top: 12px; bottom: 0; width: 211px; background: #fff; color: #555; font: 12px/20px "Noto Sans", sans-serif; overflow: hidden; }
.al-label { height: 32px; line-height: 36px; border-bottom: 1px solid #bbb; }
.al-input { height: 20px; border-bottom: 1px solid #bbb; }
.al-head { height: 33px; background: #ecf0f1; line-height: 28px; border-top: 5px solid #dfe6e8; }
.app-left li { height: 22px; border-bottom: 1px solid #999; text-indent: -4px; line-height: 21px; }
.app-left li:nth-child(odd) { background: #ecf0f1; }
.app-left li.cur { border-top: 1px solid #000; border-bottom: 1px solid #000; line-height: 20px; }
.app-bottom { position: absolute; left: 211px; bottom: 0; width: 60px; height: 80px; display: flex; background: #ecf0f1; }
.app-bottom i { flex: none; width: 19px; border-right: 1px solid #b4c0c6; }
.app-bottom i:nth-child(2) { width: 39px; border-left: 1px solid #fff; }
.app-bottom i:nth-child(3) { width: 2px; background: #666; }

/* Windows */
.window { position: absolute; display: flex; flex-direction: column; background: #f0f0f0; border: 1px solid #b3c4c9; border-top: 0; }
.main { left: 20px; right: 7px; top: 4px; bottom: 76px; }
.dialog { left: 310px; top: 296px; width: 532px; bottom: 9px; }
.title { display: flex; align-items: center; height: 24px; background: #34495e; margin: 0 -1px; padding-left: 3px; flex: none; }
.title h1 { flex: 1; padding-left: 5px; font: 12px/20px "Noto Sans", sans-serif; color: #8fa3b5; white-space: nowrap; }
.title button { width: 34px; height: 24px; padding-right: 1px; padding-bottom: 1px; }
.title button svg { width: 9px; height: 9px; }
.dialog .title { height: 30px; }
.dialog .title button { width: 42px; }

.menu { display: flex; height: 20px; padding-left: 7px; gap: 12px; flex: none; }
.menu button { font: 12px/18px "Noto Sans", sans-serif; }
.stub { width: 13px; height: 4px; margin: 20px auto 0 790px; border: 1px solid #fff; border-right-color: #999; border-bottom-color: #999; }
.bars { display: flex; height: 27px; gap: 4px; flex: none; }
.bars + .bars { margin-top: 1px; }
.toolbar { display: flex; align-items: center; border: 1px solid #fff; border-right-color: #a0a0a0; border-bottom-color: #a0a0a0; padding-right: 2px; }
.toolbar button { width: 23px; height: 23px; padding: 0 1px 1px 0; }
.toolbar .on, .tools .on { background: #c0dcf3; outline: 1px solid #90c8f6; outline-offset: -1px; }
.toolbar button.drop { width: 16px; }
.drop svg { width: 7px; height: 4px; }
.bars + .bars hr { margin-right: 4px; }
.toolbar .ch { font: bold 15px/20px "Liberation Serif", serif; color: #444; }
.toolbar .i { font-style: italic; }
.toolbar .u { font-weight: normal; text-decoration: underline; }
.grip { width: 3px; height: 20px; margin: 0 4px; background: radial-gradient(circle at 1px 1px, #b4b4b4 1px, transparent 1px) 0 0/3px 4px; }
.combo { display: flex; align-items: center; height: 18px; background: #fff; padding-left: 2px; flex: none; }
.combo > svg:last-child { width: 15px; height: 16px; padding: 6px 4px; background: #f0f0f0; pointer-events: none; }
.combo .tticon { width: 14px; height: 14px; margin-right: 1px; }
.w-zoom { width: 51px; margin-left: 5px; }
.w-style { width: 91px; margin-right: 7px; }
.w-font { width: 143px; margin-right: 7px; }
.w-size { width: 39px; margin-right: 1px; }

/* Workspace */
.workspace { flex: 1; min-height: 0; display: flex; }
.tools { width: 27px; flex: none; padding: 2px 2px 0; }
.tools button { width: 23px; height: 22px; margin-bottom: 1px; padding-right: 1px; }
.tools .s12 { width: 12px; height: 12px; }
.work { flex: 1; min-width: 0; display: flex; flex-direction: column; }
.tabs { display: flex; align-items: flex-end; height: 19px; padding-left: 7px; flex: none; border-bottom: 1px solid #999; background: repeating-conic-gradient(#fff 0 25%, #efefef 0 50%) 0 0/2px 2px; }
.tabs button { position: relative; height: 16px; padding: 0 6px; margin-right: -5px; background: #8c8c8c; clip-path: polygon(0 100%, 5px 0, calc(100% - 5px) 0, 100% 100%); isolation: isolate; line-height: 15px; }
.tabs button::before { content: ""; position: absolute; z-index: -1; inset: 1px 1px 0; background: #fff; clip-path: polygon(0 100%, 5px 0, calc(100% - 5px) 0, 100% 100%); }
.tabs .cur::before { background: #f0f0f0; }
.pages button { padding-right: 8px; margin-right: -4px; }
.panels { flex: 1; min-height: 0; display: flex; }

.left { width: 159px; flex: none; display: flex; flex-direction: column; }
.dock { display: flex; align-items: center; height: 14px; padding: 0 1px 0 3px; gap: 2px; flex: none; background: #ecf0f1; }
.dock i { flex: 1; height: 10px; background: radial-gradient(circle at 1px 1px, #b8bcbc 1px, transparent 1px) 0 0/5px 4px; }
.dock svg { width: 10px; height: 10px; }
.objtree { position: relative; display: grid; grid-template: 1fr 17px / 1fr 17px; height: 300px; flex: none; background: #fff; border: 1px solid #999; border-right: 3px double #999; border-bottom: 3px double #999; }
.objtree + .dock { height: 18px; }
.objtree ul { overflow: hidden; padding-top: 2px; background: repeating-linear-gradient(#777 0 1px, #fff 1px 2px) 26px 0/1px 100% no-repeat, repeating-linear-gradient(#777 0 1px, #fff 1px 2px) 45px 0/1px 100% no-repeat; }
.objtree li { display: flex; align-items: center; height: 16px; margin-left: 46px; white-space: nowrap; }
.objtree li::before { content: ""; width: 9px; border-top: 1px dotted #777; flex: none; }
.objtree li svg { width: 21px; height: 16px; padding: 2px 6px 2px 3px; }
.objtree li.sel span, .objtree li.sel svg { background: #d9d9d9; }
.objtree li.sel span { padding-right: 4px; }
.more { position: absolute; right: 22px; bottom: 20px; width: 12px; height: 12px; transform: rotate(90deg); }
.sb { display: flex; background: #f0f0f0; }
.sb.v { flex-direction: column; width: 17px; }
.sb.h { height: 17px; }
.sb button { width: 17px; height: 17px; }
.sb.v button { padding-bottom: 1px; }
.sb.h button { padding-right: 1px; }
.sb.v svg { width: 9px; height: 6px; }
.sb.h svg { width: 6px; height: 9px; }
.track { position: relative; flex: 1; }
.track i { position: absolute; background: #cdcdcd; }
.v .track i { left: 1px; right: 1px; }
.h .track i { top: 1px; bottom: 1px; }
.object { height: 22px; border: 1px solid #777; }
.object > svg:last-child { width: 17px; height: 16px; padding: 5px 4px; background: #fff; }
.left .tabs { height: 26px; border-bottom: 0; }
.props { display: flex; height: 185px; flex: none; border: 1px solid #999; background: #fff; }
.props .sb { border-right: 1px solid #f0f0f0; }
.clip { flex: 1; min-width: 0; overflow: hidden; padding: 1px 1px 2px; }
.clip table { width: 100%; table-layout: fixed; border-collapse: collapse; }
.clip tr { height: 16px; }
.clip th, .clip td { padding: 0; height: 16px; line-height: 15px; text-align: left; font-weight: normal; white-space: nowrap; overflow: hidden; border-bottom: 1px solid #ececec; }
.clip th { width: 79px; padding-left: 12px; border-right: 1px solid #ececec; }
.clip th.exp { padding-left: 2px; }
.exp button { display: inline-flex; width: 9px; height: 9px; border: 1px solid #888; margin-right: 2px; font-size: 9px; line-height: 7px; }
.clip td { color: #000080; padding-left: 1px; }
.clip label { display: flex; align-items: center; gap: 2px; height: 15px; padding-left: 1px; }
.clip input { appearance: none; position: relative; width: 11px; height: 11px; margin: 0; border: 1px solid #8c8c8c; background: #fff; flex: none; }
.clip input:checked::after { content: ""; position: absolute; left: 2px; top: 0; width: 4px; height: 7px; border: solid #000; border-width: 0 2px 2px 0; transform: rotate(40deg); }
.swatch { display: inline-block; width: 11px; height: 10px; margin: 0 3px 0 1px; background: #000; vertical-align: -1px; }
.clip td.ind { padding-left: 10px; }
.descr { flex: 1; margin-top: 3px; border: 1px solid #999; background: #fff; padding: 0 1px; }

.split { width: 9px; flex: none; display: flex; align-items: center; background: #ecf0f1; }
.split i { width: 6px; height: 34px; background: radial-gradient(circle at 3px 2px, #777 1px, transparent 1px) 0 0/6px 5px, #cdcdcd; }
.narrow { width: 6px; }

/* Report designer */
.designer { flex: 1; min-width: 0; display: grid; grid-template: 24px 1fr 17px / 18px minmax(0, 1fr) 17px; background: #f0f0f0; }
.ruler-h { grid-area: 1 / 2 / 2 / 4; display: flex; overflow: hidden; height: 14px; margin: 5px 0 0 69px; padding-left: 20px; background: #fff; font: 9px/14px "DejaVu Sans Condensed", sans-serif; text-align: center; }
.ruler-h li { width: 1cm; flex: none; background: linear-gradient(#000, #000) 0 5px/1px 4px no-repeat; }
.ruler-v { grid-area: 2 / 1 / 4 / 2; width: 13px; margin-top: 42px; padding-top: 19px; overflow: hidden; background: #fff; font: 9px/13px "DejaVu Sans Condensed", sans-serif; }
.ruler-v li { height: 1cm; writing-mode: vertical-rl; transform: rotate(180deg); text-align: center; background: linear-gradient(#000, #000) 5px 100%/4px 1px no-repeat; }
.canvas { grid-area: 2 / 2; background: #808080; padding: 10px 0 0 10px; overflow: hidden; }
.sheet { height: 100%; border: 1px solid #333; border-width: 1px 0 0 1px; background: #fff; padding: 28px 0 0 56px; }
.area { height: 100%; border: 1px dashed #b0b0b0; border-width: 1px 0 0 1px; background: linear-gradient(90deg, #e4e4e4 1px, transparent 1px) 0 0/1cm 1cm, linear-gradient(#e4e4e4 1px, transparent 1px) 0 0/1cm 1cm, linear-gradient(90deg, #f5f5f5 1px, transparent 1px) 19px 0/1cm 1cm, linear-gradient(#f5f5f5 1px, transparent 1px) 0 19px/1cm 1cm; }
.designer > .v { grid-area: 2 / 3; }
.designer > .h { grid-area: 3 / 2; }
.band { position: relative; }
.band h2 { height: 19px; padding-left: 5px; line-height: 18px; border-top: 1px solid #808080; background: #efefef; }
.head { height: 231px; }
.memo { position: absolute; white-space: nowrap; font: 11px/13px "Liberation Sans", Arial, sans-serif; }
.where { left: 0; top: 19px; width: 593px; padding: 2px 0 0 4px; height: 54px; }
.where i { position: absolute; width: 5px; height: 5px; background: #000; }
.where .n { left: 294px; top: -2px; }
.where .s { left: 294px; bottom: -2px; }
.where .ne { right: -2px; top: -2px; border-radius: 0 0 0 3px; }
.where .e { right: -2px; top: 24px; }
.where .se { right: -2px; bottom: -2px; border-radius: 3px 0 0; }
.where .nw { left: 0; top: -2px; width: 3px; clip-path: polygon(0 0, 100% 50%, 0 100%); }
.where .w { left: 0; top: 24px; width: 2px; }
.where .sw { left: 0; bottom: -2px; width: 3px; clip-path: polygon(0 0, 100% 50%, 0 100%); }
.ident { left: 857px; top: 20px; color: #f00; font-size: 14px; font-weight: bold; line-height: 18px; padding-left: 2px; background: linear-gradient(#000, #000) 0 0/3px 1px no-repeat, linear-gradient(#000, #000) 0 0/1px 3px no-repeat, linear-gradient(#000, #000) 0 100%/3px 1px no-repeat, linear-gradient(#000, #000) 0 100%/1px 3px no-repeat; }
.doc { left: 263px; top: 73px; font: bold 15px/20px "DejaVu Sans Condensed", sans-serif; }
.form { width: 911px; table-layout: fixed; border-collapse: collapse; font: 11px/13px "Liberation Sans", Arial, sans-serif; text-align: center; }
.head .form { position: absolute; left: 0; top: 98px; }
.form td { border: 1px solid #000; padding: 0; position: relative; }
.c1 { width: 25px; } .c2 { width: 87px; } .c3 { width: 216px; } .c4 { width: 128px; } .c5 { width: 189px; } .c6 { width: 72px; } .c7 { width: 151px; } .c8 { width: 43px; }
.names { height: 76px; font-size: 8px; line-height: 10px; }
.nums { height: 15px; }
.form td.part { padding-left: 52px; white-space: nowrap; }
.data { height: 170px; }
.data h2 { height: 18px; background: #dfa730; font-weight: bold; }
.data tr { height: 110px; }
.form .low { vertical-align: bottom; }
.form .first { text-align: left; padding-left: 4px; }
.flag { position: relative; }
.flag::before { content: ""; position: absolute; left: 1px; top: 1px; border: 4px solid transparent; border-left: 4px solid #f00; border-right: 0; }
.foot { height: 56px; border-bottom: 1px solid #808080; }

.right { width: 143px; flex: none; display: flex; flex-direction: column; background: #ecf0f1; }
.right .tabs button { padding: 0 5px; min-width: 36px; justify-content: flex-start; }
.datapanel { position: relative; flex: 1; min-height: 0; background: #fff; border: 1px solid #999; border-right: 3px double #999; border-bottom: 3px double #999; border-top: 0; }
.databar { display: flex; align-items: center; height: 27px; background: #ecf0f1; border: 1px solid #fff; }
.databar button { width: 24px; height: 23px; padding-bottom: 1px; }
.databar button.drop { width: 15px; }
.databar hr { margin: 0 13px 0 11px; }
.databar .dr, .root .dr, .node .dr { width: 12px; height: 14px; }
.databar svg.s14 { width: 14px; height: 14px; }
.databar input { flex: 1; min-width: 0; height: 20px; margin-left: 3px; border: 0; background: #fff; }
.databar .find { width: 22px; background: #fff; height: 20px; padding: 0; }
.up { position: absolute; right: 5px; top: 32px; width: 12px; height: 12px; }
.root, .node { display: flex; align-items: center; height: 16px; font-weight: bold; gap: 7px; padding-left: 6px; }
.node { gap: 0; }
.node .chev { width: 9px; height: 6px; }
.node i { width: 4px; margin: 0 3px; border-top: 1px dotted #777; }
.node .dr { margin-right: 6px; }
.fields { margin-left: 31px; background: repeating-linear-gradient(#777 0 1px, #fff 1px 2px) 0 0/1px 104px no-repeat; }
.fields li { display: flex; align-items: center; height: 16px; }
.fields li::before { content: ""; width: 10px; border-top: 1px dotted #777; margin-right: 1px; }
.fields svg { width: 13px; height: 12px; margin-right: 7px; }
.fields .sel { width: 52px; background: linear-gradient(#d9d9d9, #d9d9d9) 9px 0 no-repeat; }

.status { display: flex; align-items: center; height: 21px; flex: none; border-top: 1px solid #d4d4d4; position: relative; padding-top: 1px; }
.status span { display: flex; align-items: center; white-space: nowrap; }
.status svg { width: 14px; height: 14px; }
.unit { width: 75px; height: 17px; padding-left: 1px; border-right: 1px solid #c8c8c8; }
.xy { margin-left: 6px; width: 106px; }
.wh { width: 630px; }
.wh svg { margin-right: 2px; }
.sizer { position: absolute; right: 1px; bottom: 1px; width: 10px; height: 10px; background: radial-gradient(circle at 1px 1px, #aaa 1px, transparent 1px) 0 0/4px 4px; clip-path: polygon(100% 0, 100% 100%, 0 100%); }

/* Variable editor */
.dlgbar { display: flex; align-items: center; height: 30px; padding-left: 4px; background: #ecf0f1; flex: none; }
.dlgbar button { width: 23px; height: 22px; padding-right: 1px; }
.dlgbody { flex: 1; min-height: 0; display: flex; gap: 3px; }
.vars { width: 127px; flex: none; display: flex; flex-direction: column; justify-content: space-between; background: #fff; border: 1px solid #999; padding: 1px 1px 2px; }
.none { height: 16px; background: #b8b8b8; padding-left: 2px; overflow: hidden; white-space: nowrap; }
.pick { flex: 1; min-width: 0; display: flex; flex-direction: column; }
.dialog .tabs { height: 18px; }
.exprlabel { height: 20px; line-height: 20px; padding-left: 5px; color: #555; background: #ecf0f1; flex: none; }
textarea { display: block; height: 77px; flex: none; width: 100%; border: 1px solid #999; background: #fff; resize: none; padding: 2px; }
```
